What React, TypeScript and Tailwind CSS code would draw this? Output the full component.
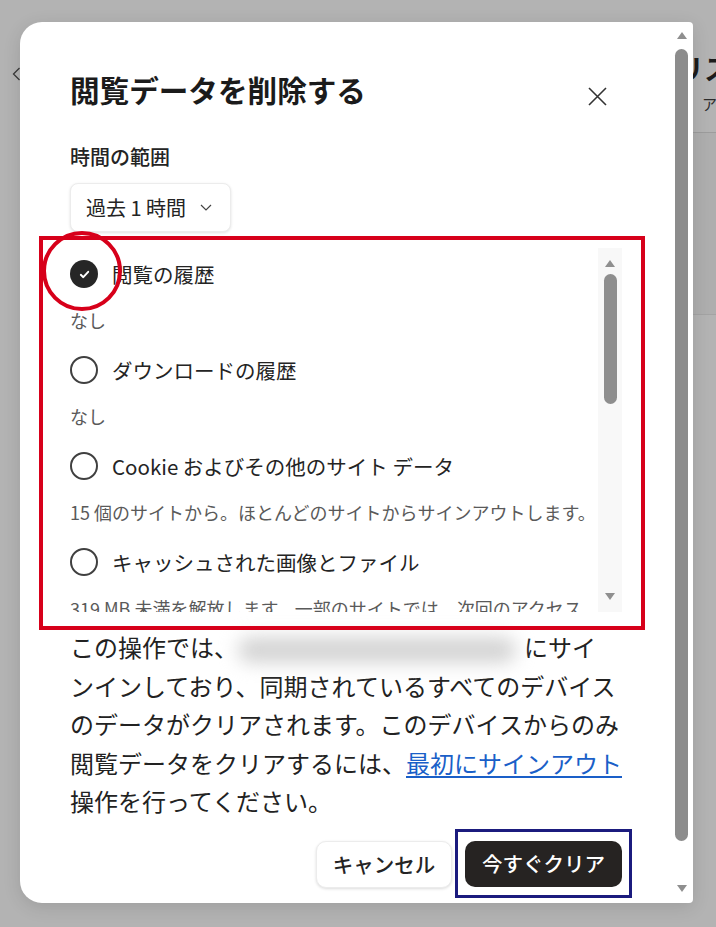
import React from "react";

const items = [
  { label: "閲覧の履歴", sub: "なし", checked: true },
  { label: "ダウンロードの履歴", sub: "なし", checked: false },
  {
    label: "Cookie およびその他のサイト データ",
    sub: "15 個のサイトから。ほとんどのサイトからサインアウトします。",
    checked: false,
  },
  {
    label: "キャッシュされた画像とファイル",
    sub: "319 MB 未満を解放します。一部のサイトでは、次回のアクセスが遅くなる可能性があります。",
    checked: false,
  },
];

const Check = ({ checked }: { checked: boolean }) =>
  checked ? (
    <span className="flex h-[28px] w-[28px] shrink-0 items-center justify-center rounded-full bg-[#262626]">
      <svg width="13" height="13" viewBox="0 0 13 13">
        <path
          d="M2.8 6.8 L5.3 9.2 L10.2 3.8"
          stroke="white"
          strokeWidth="1.9"
          fill="none"
          strokeLinecap="round"
          strokeLinejoin="round"
        />
      </svg>
    </span>
  ) : (
    <span className="h-[28px] w-[28px] shrink-0 rounded-full border-[2.5px] border-[#404040]" />
  );

const Arrow = ({ up }: { up?: boolean }) => (
  <svg width="10" height="7" viewBox="0 0 10 7">
    <polygon points={up ? "5,0 10,7 0,7" : "0,0 10,0 5,7"} fill="#8f8f8f" />
  </svg>
);

const App = () => {
  return (
    <div className="relative h-[927px] w-[716px] overflow-hidden bg-[#b3b3b3] font-['Noto_Sans_CJK_JP','Noto_Sans',sans-serif]">
      {/* page behind the dialog */}
      <div className="flex">
        <div className="w-[676px] pl-[12px] pt-[67px]">
          <svg width="9" height="14" viewBox="0 0 9 14">
            <path d="M7.5 1 L1.5 7 L7.5 13" stroke="#3a3a3a" strokeWidth="1.3" fill="none" />
          </svg>
        </div>
        <div className="flex-1 overflow-hidden whitespace-nowrap">
          <div className="h-[133px] border-b border-[#9c9c9c] pt-[50px]">
            <div className="text-[28px] font-bold leading-[36px] text-[#1c1c1c]">リスト</div>
            <div className="ml-[26px] mt-[8px] text-[15px] leading-[20px] text-[#2d2d2d]">アカウント</div>
          </div>
          <div className="h-[182px] border-b border-[#a3a3a3] bg-[#aeaeae]" />
        </div>
      </div>

      {/* dialog */}
      <div className="absolute left-[20px] top-[22px] flex h-[881px] w-[673px] rounded-l-[22px] rounded-r-[4px] bg-white shadow-[0_4px_18px_rgba(0,0,0,0.12)]">
        <div className="flex flex-1 flex-col pl-[50px] pr-[48px] pt-[48px] text-[#1f1f1f]">
          <div className="flex items-start justify-between">
            <h1 className="text-[29.6px] font-bold leading-[40px] text-[#1b1b1b]">閲覧データを削除する</h1>
            <button className="mr-[15px] mt-[17px]">
              <svg width="19" height="19" viewBox="0 0 19 19">
                <path d="M1 1 L18 18 M18 1 L1 18" stroke="#333" strokeWidth="1.6" />
              </svg>
            </button>
          </div>

          <div className="mt-[33px] text-[20px] font-medium leading-[28px] text-[#242424]">時間の範囲</div>

          <button className="mt-[12px] flex h-[49px] w-[161px] items-center gap-[14px] rounded-[8px] border border-[#ececec] bg-white pl-[15px] text-[20px] text-[#242424] shadow-[0_1px_3px_rgba(0,0,0,0.12)]">
            <span>過去 1 時間</span>
            <svg width="12" height="7" viewBox="0 0 12 7">
              <path d="M1 1 L6 6 L11 1" stroke="#444" strokeWidth="1.2" fill="none" />
            </svg>
          </button>

          {/* scrollable list */}
          <div className="mt-[16px] flex h-[364px] w-[552px] overflow-hidden">
            <div className="flex-1 overflow-hidden pt-[12px]">
              {items.map((it) => (
                <div key={it.label}>
                  <div className="flex h-[28px] items-center gap-[14px]">
                    <Check checked={it.checked} />
                    <span className="whitespace-nowrap text-[20.5px] leading-[28px] text-[#242424]">{it.label}</span>
                  </div>
                  <div className="mb-[24px] mt-[20px] text-[18px] leading-[24px] text-[#5a5a5a]">{it.sub}</div>
                </div>
              ))}
            </div>
            <div className="flex w-[24px] flex-col items-center bg-[#f8f8f8] pt-[12px]">
              <Arrow up />
              <div className="mt-[7px] h-[130px] w-[13px] rounded-full bg-[#8e8e8e]" />
              <div className="flex-1" />
              <div className="mb-[12px]">
                <Arrow />
              </div>
            </div>
          </div>

          {/* notice */}
          <div className="mt-[16px] whitespace-nowrap text-[24px] leading-[38.5px] text-[#222]">
            <div>
              この操作では、
              <span className="mr-[8px] inline-block h-[26px] w-[278px] rounded-full bg-[#d4d4d4] align-middle blur-[9px]" />
              にサイ
            </div>
            <div>ンインしており、同期されているすべてのデバイス</div>
            <div>のデータがクリアされます。このデバイスからのみ</div>
            <div>
              閲覧データをクリアするには、
              <a className="text-[#1a5fc8] underline underline-offset-[3px]">最初にサインアウト</a>
            </div>
            <div>操作を行ってください。</div>
          </div>

          <div className="mt-[20px] flex justify-end gap-[13px]">
            <button className="h-[47px] w-[136px] rounded-[10px] border border-[#ececec] bg-white text-[20.5px] font-medium text-[#242424] shadow-[0_1px_3px_rgba(0,0,0,0.14)]">
              キャンセル
            </button>
            <button className="h-[46px] w-[157px] rounded-[10px] bg-[#262322] text-[20.5px] font-medium text-white">
              今すぐクリア
            </button>
          </div>
        </div>

        {/* dialog scrollbar */}
        <div className="flex w-[23px] flex-col items-center pt-[10px]">
          <Arrow up />
          <div className="mt-[10px] h-[792px] w-[13px] rounded-full bg-[#8c8c8c]" />
          <div className="flex-1" />
          <div className="mb-[11px]">
            <Arrow />
          </div>
        </div>
      </div>

      {/* annotations */}
      <div className="absolute left-[39px] top-[236px] h-[394px] w-[606px] border-[4px] border-[#d7001a]" />
      <div className="absolute left-[42px] top-[231px] h-[80px] w-[80px] rounded-full border-[4px] border-[#d7001a]" />
      <div className="absolute left-[455px] top-[829px] h-[69px] w-[177px] border-[3px] border-[#1b1b7e]" />
    </div>
  );
};

export default App;
